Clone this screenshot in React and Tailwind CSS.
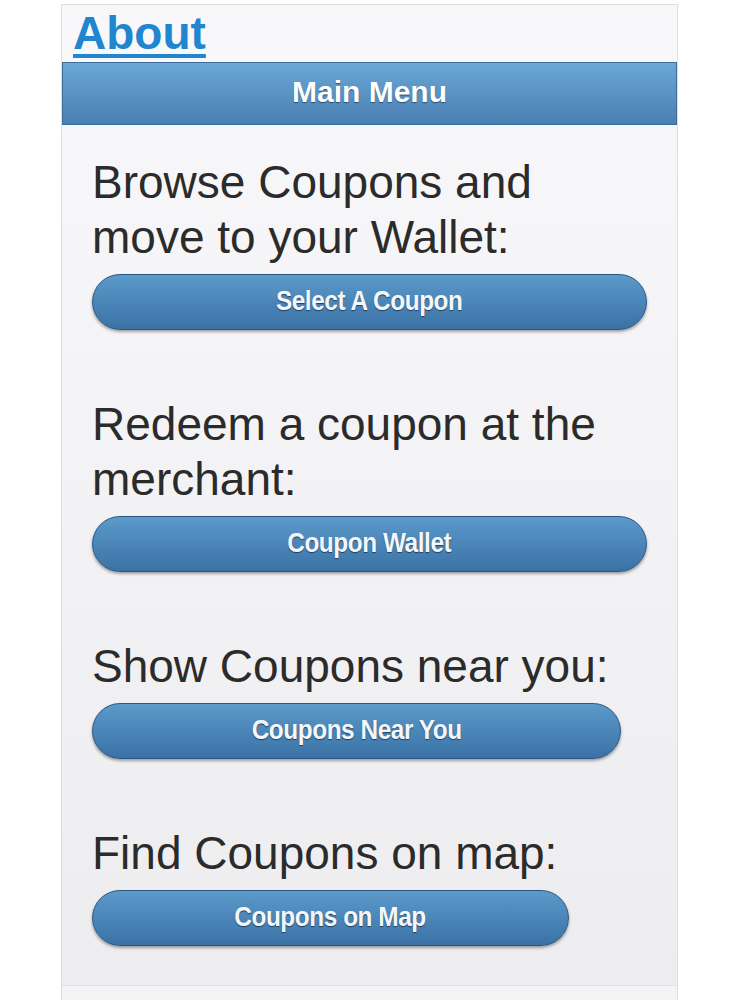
import React from 'react';

const sections = [
  { lines: ['Browse Coupons and', 'move to your Wallet:'], label: 'Select A Coupon', width: 'w-[555px]' },
  { lines: ['Redeem a coupon at the', 'merchant:'], label: 'Coupon Wallet', width: 'w-[555px]' },
  { lines: ['Show Coupons near you:'], label: 'Coupons Near You', width: 'w-[529px]' },
  { lines: ['Find Coupons on map:'], label: 'Coupons on Map', width: 'w-[477px]' },
];

function MenuButton({ label, width }) {
  return (
    <a
      href="#"
      className={`${width} h-[56px] mt-[9px] flex items-center justify-center rounded-full border border-[#2a5782] bg-gradient-to-b from-[#5b9aca] to-[#3b72a6] shadow-[0_2px_3px_rgba(0,0,0,0.35)] text-[#f4f6fa] text-[28px] font-bold tracking-[-0.5px] [text-shadow:0_1px_1px_#1d3f60]`}
    >
      <span className="inline-block scale-x-[0.87] pb-[2px]">{label}</span>
    </a>
  );
}

export default function App() {
  return (
    <div className="min-h-[1000px] bg-white [font-family:'Liberation_Sans',Arial,sans-serif]">
      <div className="ml-[61px] w-[617px] pt-[4px] flex flex-col min-h-[1000px]">
        <div className="border-x border-t border-[#dedee0] bg-[#f8f8fa] flex-1 flex flex-col">
          <div className="h-[57px] pl-[11px]">
            <a href="#" className="text-[46px] leading-[57px] font-bold text-[#1f86cf] underline decoration-[4px] underline-offset-[5px]">
              About
            </a>
          </div>
          <div className="h-[63px] pb-[5px] flex items-center justify-center border border-[#3c6d9c] bg-gradient-to-b from-[#6aa7d7] to-[#4a7fb2] text-white text-[30px] font-bold [text-shadow:0_1px_1px_#2a4f74]">
            Main Menu
          </div>
          <div className="bg-gradient-to-b from-[#f7f7f9] to-[#ededef] pl-[30px] pt-[30px] pb-[39px] border-b border-[#e2e2e4]">
            {sections.map((s, i) => (
              <div key={s.label} className={i > 0 ? 'mt-[67px]' : ''}>
                <h2 className="text-[46px] leading-[55px] text-[#2b2b2b] font-normal">
                  {s.lines.map((l) => (
                    <div key={l}>{l}</div>
                  ))}
                </h2>
                <MenuButton label={s.label} width={s.width} />
              </div>
            ))}
          </div>
          <div className="flex-1 bg-[#f4f4f6]"></div>
        </div>
      </div>
    </div>
  );
}
